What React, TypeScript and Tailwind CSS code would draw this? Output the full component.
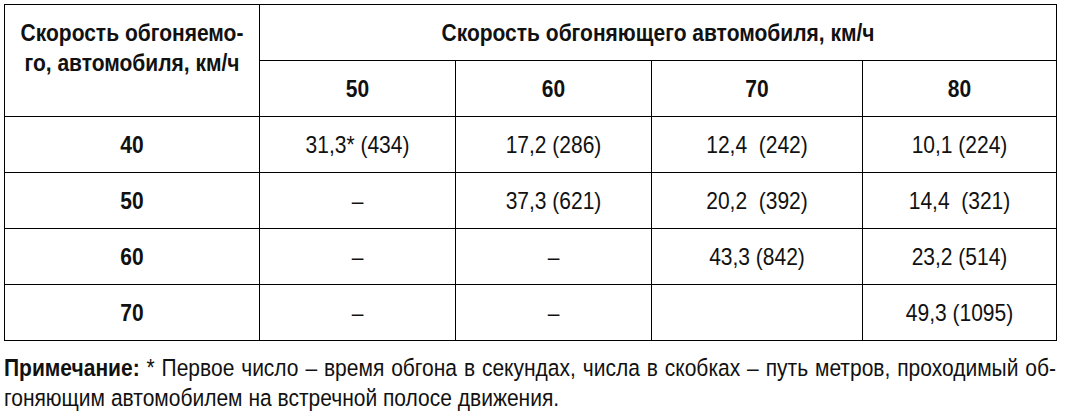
const rows: [string, string, string, string, string][] = [
  ['40', '31,3* (434)', '17,2 (286)', '12,4  (242)', '10,1 (224)'],
  ['50', '–', '37,3 (621)', '20,2  (392)', '14,4  (321)'],
  ['60', '–', '–', '43,3 (842)', '23,2 (514)'],
  ['70', '–', '–', '', '49,3 (1095)'],
]

// the source font is a tall, narrow Arial; stretch glyphs a little vertically
function T({ children }: { children: React.ReactNode }) {
  return <span className="inline-block scale-y-[1.15] whitespace-pre">{children}</span>
}

export default function App() {
  return (
    <div
      className="w-[1065px] h-[416px] bg-white text-[#111] pt-[4px] pl-[4px]"
      style={{ fontFamily: '"Liberation Sans", Arial, sans-serif' }}
    >
      <table className="border-collapse table-fixed text-[21px] leading-none">
        <colgroup>
          <col className="w-[255px]" />
          <col className="w-[196px]" />
          <col className="w-[196px]" />
          <col className="w-[211px]" />
          <col className="w-[194px]" />
        </colgroup>
        <thead>
          <tr className="h-[56px]">
            <th rowSpan={2} className="border border-black font-bold align-top pt-[17px] text-center">
              <span className="inline-block scale-y-[1.15] leading-[26px]">
                Скорость обгоняемо-
                <br />
                го, автомобиля, км/ч
              </span>
            </th>
            <th colSpan={4} className="border border-black font-bold text-center">
              <T>Скорость обгоняющего автомобиля, км/ч</T>
            </th>
          </tr>
          <tr className="h-[56px]">
            {['50', '60', '70', '80'].map(v => (
              <th key={v} className="border border-black font-bold text-center">
                <T>{v}</T>
              </th>
            ))}
          </tr>
        </thead>
        <tbody>
          {rows.map(r => (
            <tr key={r[0]} className="h-[56px]">
              <td className="border border-black font-bold text-center">
                <T>{r[0]}</T>
              </td>
              {r.slice(1).map((c, i) => (
                <td key={i} className="border border-black text-center">
                  <T>{c}</T>
                </td>
              ))}
            </tr>
          ))}
        </tbody>
      </table>

      <div className="w-[1052px] mt-[12px] text-[21px] leading-[26px] origin-top scale-y-[1.15]">
        <p className="text-justify [text-align-last:justify]">
          <b>Примечание:</b> * Первое число – время обгона в секундах, числа в скобках – путь метров, проходимый об-
        </p>
        <p>гоняющим автомобилем на встречной полосе движения.</p>
      </div>
    </div>
  )
}
